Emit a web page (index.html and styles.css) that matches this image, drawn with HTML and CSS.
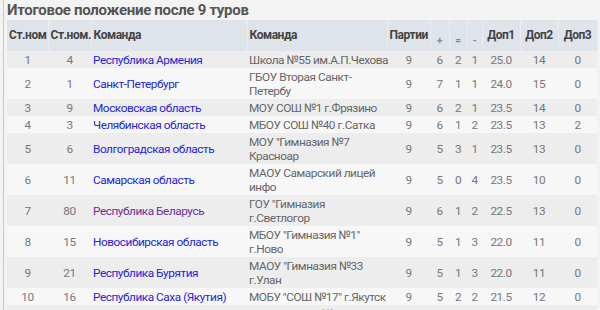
FILE: index.html
```html
<!DOCTYPE html>
<html lang="ru">
<head>
<meta charset="utf-8">
<link rel="stylesheet" href="styles.css">
</head>
<body>
<div class="page">
  <h2 class="title">Итоговое положение после 9 туров</h2>
  <table class="results">
    <colgroup>
      <col class="c-n1"><col class="c-n2"><col class="c-team"><col class="c-school"><col class="c-games">
      <col class="c-w"><col class="c-d"><col class="c-l"><col class="c-x1"><col class="c-x2"><col class="c-x3">
    </colgroup>
    <thead>
      <tr>
        <th class="ctr">Ст.ном</th>
        <th class="ctr">Ст.ном.</th>
        <th>Команда</th>
        <th>Команда</th>
        <th class="ctr">Партии</th>
        <th class="ctr small">+</th>
        <th class="ctr small">=</th>
        <th class="ctr small">-</th>
        <th class="ctr">Доп1</th>
        <th class="ctr">Доп2</th>
        <th class="ctr">Доп3</th>
      </tr>
    </thead>
    <tbody>
      <tr><td>1</td><td>4</td><td class="t"><a href="#">Республика Армения</a></td><td class="t nw">Школа №55 им.А.П.Чехова</td><td>9</td><td>6</td><td>2</td><td>1</td><td>25.0</td><td>14</td><td>0</td></tr>
      <tr><td>2</td><td>1</td><td class="t"><a href="#">Санкт-Петербург</a></td><td class="t">ГБОУ Вторая Санкт-Петербу</td><td>9</td><td>7</td><td>1</td><td>1</td><td>24.0</td><td>15</td><td>0</td></tr>
      <tr><td>3</td><td>9</td><td class="t"><a href="#">Московская область</a></td><td class="t">МОУ СОШ №1 г.Фрязино</td><td>9</td><td>6</td><td>2</td><td>1</td><td>23.5</td><td>14</td><td>0</td></tr>
      <tr><td>4</td><td>3</td><td class="t"><a href="#">Челябинская область</a></td><td class="t">МБОУ СОШ №40 г.Сатка</td><td>9</td><td>6</td><td>1</td><td>2</td><td>23.5</td><td>13</td><td>2</td></tr>
      <tr><td>5</td><td>6</td><td class="t"><a href="#">Волгоградская область</a></td><td class="t">МОУ "Гимназия №7 Красноар</td><td>9</td><td>5</td><td>3</td><td>1</td><td>23.5</td><td>13</td><td>0</td></tr>
      <tr><td>6</td><td>11</td><td class="t"><a href="#">Самарская область</a></td><td class="t">МАОУ Самарский лицей инфо</td><td>9</td><td>5</td><td>0</td><td>4</td><td>23.5</td><td>10</td><td>0</td></tr>
      <tr><td>7</td><td>80</td><td class="t"><a href="#" class="visited">Республика Беларусь</a></td><td class="t">ГОУ "Гимназия г.Светлогор</td><td>9</td><td>6</td><td>1</td><td>2</td><td>22.5</td><td>13</td><td>0</td></tr>
      <tr><td>8</td><td>15</td><td class="t"><a href="#">Новосибирская область</a></td><td class="t">МБОУ "Гимназия №1" г.Ново</td><td>9</td><td>5</td><td>1</td><td>3</td><td>22.0</td><td>11</td><td>0</td></tr>
      <tr><td>9</td><td>21</td><td class="t"><a href="#">Республика Бурятия</a></td><td class="t">МАОУ "Гимназия №33 г.Улан</td><td>9</td><td>5</td><td>1</td><td>3</td><td>22.0</td><td>11</td><td>0</td></tr>
      <tr><td>10</td><td>16</td><td class="t"><a href="#">Республика Саха (Якутия)</a></td><td class="t">МОБУ "СОШ №17" г.Якутск</td><td>9</td><td>5</td><td>2</td><td>2</td><td>21.5</td><td>12</td><td>0</td></tr>
      <tr><td>11</td><td>7</td><td class="t"><a href="#">Краснодарский край</a></td><td class="t">МБОУ "Лицей №64" г.Краснодар</td><td>9</td><td>5</td><td>1</td><td>3</td><td>21.0</td><td>12</td><td>0</td></tr>
    </tbody>
  </table>
</div>
</body>
</html>
```
FILE: styles.css
```css
html, body {
  margin: 0;
  padding: 0;
  background: #f3f3f3;
}
body {
  font-family: Roboto, "Noto Sans", "DejaVu Sans", sans-serif;
  color: #666;
  padding-left: 3px;
}
.page {
  border-left: 1px solid #c9c9c9;
  padding-left: 3px;
  min-height: 310px;
  box-sizing: border-box;
}
.title {
  margin: 0;
  font-size: 15px;
  line-height: 20px;
  font-weight: 700;
  letter-spacing: -0.3px;
  color: #555;
  height: 20px;
}
.results {
  width: 590px;
  table-layout: fixed;
  border-collapse: collapse;
  font-size: 11.8px;
  letter-spacing: -0.45px;
}
.c-n1 { width: 41px; }
.c-n2 { width: 43px; }
.c-team { width: 156px; }
.c-school { width: 140px; }
.c-games { width: 43px; }
.c-w { width: 19px; }
.c-d { width: 18px; }
.c-l { width: 15px; }
.c-x1 { width: 38px; }
.c-x2 { width: 38px; }
.c-x3 { width: 39px; }
.results th {
  background: #dfe3ea;
  color: #444;
  font-weight: 700;
  text-align: left;
  height: 28px;
  padding: 0 2px;
  border-right: 1px solid #e9ecf1;
  line-height: 15px;
  white-space: nowrap;
  font-size: 12px;
}
.results th.ctr { text-align: center; }
.results th.small {
  vertical-align: bottom;
  padding-bottom: 3px;
  font-size: 10px;
  color: #888;
}
.results td {
  text-align: center;
  padding: 1.5px 1px;
  line-height: 14px;
  color: #777;
}
.results td.t {
  text-align: left;
  padding-left: 2px;
  padding-right: 0;
}
.results td.nw { white-space: nowrap; }
.results td.t + td.t { color: #666; }
.results tbody tr:nth-child(odd) td { background: #ededed; }
.results tbody tr:nth-child(even) td { background: #f7f7f7; }
.results a {
  color: #2525d8;
  text-decoration: none;
}
.results a.visited { color: #6b2f97; }
```
